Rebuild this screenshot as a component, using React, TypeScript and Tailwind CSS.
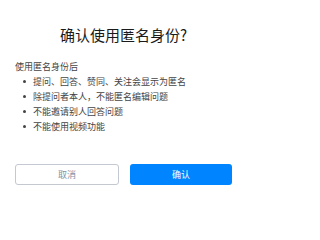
export default function App() {
  const items = [
    "提问、回答、赞同、关注会显示为匿名",
    "除提问者本人，不能匿名编辑问题",
    "不能邀请别人回答问题",
    "不能使用视频功能",
  ];
  return (
    <div
      className="w-[247px] h-[204px] bg-white px-[15px] pt-[25px]"
      style={{ fontFamily: '"Noto Sans CJK SC", "Noto Sans", sans-serif' }}
    >
      <h1 className="text-center text-[15px] leading-[20px] text-[#1a1a1a]">
        确认使用匿名身份?
      </h1>
      <div className="mt-[14px] text-[9px] leading-[15px] text-[#444]">
        <p>使用匿名身份后</p>
        <ul>
          {items.map((t) => (
            <li key={t} className="flex items-center">
              <span className="w-[18px] flex justify-center">
                <span className="block w-[3px] h-[3px] rounded-full bg-[#444]" />
              </span>
              <span>{t}</span>
            </li>
          ))}
        </ul>
      </div>
      <div className="mt-[30px] flex gap-[11px]">
        <button className="flex-1 h-[21px] rounded-[3px] border border-[#c4c8d0] text-[9px] text-[#8590a6]">
          取消
        </button>
        <button className="flex-1 h-[21px] rounded-[3px] bg-[#0084ff] text-[9px] text-white">
          确认
        </button>
      </div>
    </div>
  );
}
